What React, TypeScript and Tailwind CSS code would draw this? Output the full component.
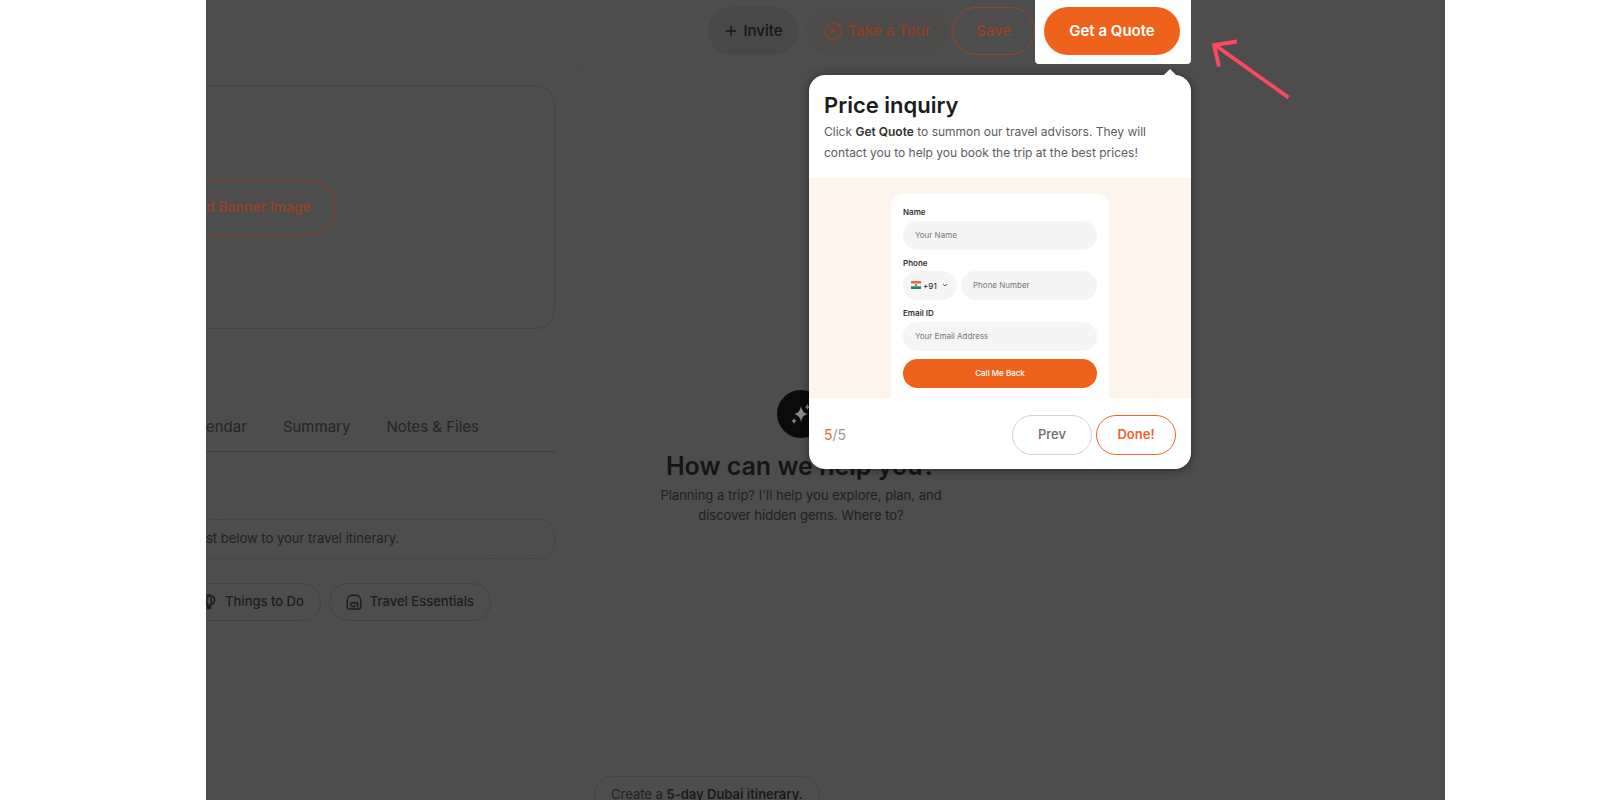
/**
 * Product tour, last step
 * Dimmed trip planner with the quote button highlighted and its popover open
 */

import React from 'react'
import type { ReactNode } from 'react'
import { Plus } from 'lucide-react'

// ============================================================================
// Icons
// ============================================================================

const TourIcon: React.FC = () => (
  <svg aria-hidden="true" viewBox="0 0 20 20" className="h-5 w-5" fill="none" stroke="currentColor" strokeWidth="1.6">
    <path d="M8 1.900a8.300 8.300 0 1 1-6.300 8.600" />
    <path d="M2.200 7.200l.7-1.500M4.400 3.900l1.300-1" strokeLinecap="round" />
    <path d="M8 6.800v6.400l5-3.200z" fill="currentColor" stroke="none" />
  </svg>
)

const BalloonIcon: React.FC = () => (
  <svg aria-hidden="true" viewBox="0 0 16 16" className="h-4 w-4" fill="none" stroke="currentColor" strokeWidth="1.4">
    <path d="M6 11C3.800 9.800 2.400 7.900 2.400 5.900a5.600 5 0 0 1 11.200 0C13.600 7.900 12.200 9.800 10 11z" />
    <path d="M6.300 11C5.200 7 5.300 3.500 8 1c2.700 2.500 2.800 6 1.700 10" />
    <path d="M6.500 12.500h3v2h-3z" fill="currentColor" />
  </svg>
)

const BackpackIcon: React.FC = () => (
  <svg aria-hidden="true" viewBox="0 0 16 16" className="h-4 w-4" fill="none" stroke="currentColor" strokeWidth="1.4">
    <path d="M1.300 6.500A5 5 0 0 1 6 1.200h4a5 5 0 0 1 4.700 5.300V13a2 2 0 0 1-2 2H3.300a2 2 0 0 1-2-2z" />
    <path d="M9 12.500H6.200a1.500 1.500 0 0 1-1.500-1.500v-.7a1.500 1.500 0 0 1 1.500-1.500h4.500a1 1 0 0 1 1 1v3.700M9 10.800v1.700" />
  </svg>
)

const SparkleIcon: React.FC = () => (
  <svg aria-hidden="true" viewBox="0 0 24 24" className="h-6 w-6" fill="currentColor">
    <path d="M12 4q1 7 7 8-6 1-7 8-1-7-7-8 6-1 7-8z" />
    <path d="M5 16q.4 2.600 2.600 3Q5.400 19.400 5 22q-.4-2.600-2.600-3Q4.600 18.600 5 16z" />
    <path d="M18.500 2q.4 2.600 2.600 3-2.200.4-2.600 3-.4-2.600-2.600-3 2.200-.4 2.600-3z" />
  </svg>
)

const IndiaFlag: React.FC = () => (
  <svg aria-hidden="true" viewBox="0 0 10 8" className="h-2 w-[10px]">
    <path d="M0 0h10v2.700H0z" fill="#f0642d" />
    <path d="M0 2.700h10v2.600H0z" fill="#f4f4f0" />
    <path d="M0 5.300h10V8H0z" fill="#23845a" />
    <circle cx="5" cy="4" r="1" fill="#4a5a9a" />
  </svg>
)

// ============================================================================
// Trip planner (dimmed)
// ============================================================================

const Chip: React.FC<{ icon: ReactNode; label: string }> = ({ icon, label }) => (
  <button className="flex h-[38px] shrink-0 items-center gap-2 rounded-full border border-[#434343] px-4 text-[13px] font-medium text-[#1c1c1c]">
    {icon}
    {label}
  </button>
)

const Itinerary: React.FC = () => (
  <section className="flex w-[349px] shrink-0 flex-col whitespace-nowrap">
    <div className="mt-[15px] flex h-[244px] items-center rounded-r-[20px] border border-l-0 border-[#444444]">
      <button className="h-[55px] rounded-r-full border border-l-0 border-[#8c3d20] pr-6 text-sm font-medium text-[#9c4222]">
        d Banner Image
      </button>
    </div>

    <nav className="mt-[74px] flex h-[49px] gap-9 border-b border-[#3c3c3c] text-[15px] leading-[47px] text-[#252525]">
      <a href="#calendar">endar</a>
      <a href="#summary">Summary</a>
      <a href="#notes">Notes &amp; Files</a>
    </nav>

    <p className="mt-[67px] flex h-10 items-center rounded-r-2xl border border-l-0 border-dashed border-[#424242] text-[13px] text-[#202020]">
      st below to your travel itinerary.
    </p>

    <div className="mt-6 flex justify-end gap-2 border-b border-[#494949] pr-16 pb-[77px]">
      <Chip icon={<BalloonIcon />} label="Things to Do" />
      <Chip icon={<BackpackIcon />} label="Travel Essentials" />
    </div>
  </section>
)

const Assistant: React.FC = () => (
  <section className="ml-[22px] flex w-[448px] shrink-0 flex-col border-x border-[#4b4b4b] px-4 text-center">
    <div className="mt-80 flex h-12 w-12 items-center justify-center self-center rounded-full bg-[#0b0b0b] text-[#8a8a8a]">
      <SparkleIcon />
    </div>
    <h1 className="mt-3 text-[25px] leading-8 font-semibold text-[#151515]">How can we help you?</h1>
    <p className="mt-[3px] text-[13px] leading-5 text-[#202020]">
      Planning a trip? I'll help you explore, plan, and
      <br />
      discover hidden gems. Where to?
    </p>
    <button className="mt-auto -mb-[14px] h-[38px] shrink-0 self-start rounded-full border border-[#434343] px-4 text-[13px] text-[#222222]">
      Create a <strong className="font-semibold text-[#1a1a1a]">5-day Dubai itinerary.</strong>
    </button>
  </section>
)

// ============================================================================
// Tour popover
// ============================================================================

const inputClass = 'h-[29px] w-full min-w-0 rounded-full bg-[#f5f5f5] px-3 text-[8px] text-[#555555] outline-none placeholder:text-[#777777]'
const labelClass = 'mb-[2px] block text-[8px] leading-3 font-semibold text-[#333333]'

const CallbackForm: React.FC = () => (
  <form className="w-[218px] rounded-t-xl bg-white px-3 pt-3 pb-[10px]" onSubmit={(e) => e.preventDefault()}>
    <label htmlFor="name" className={labelClass}>Name</label>
    <input id="name" placeholder="Your Name" className={inputClass} />

    <label htmlFor="phone" className={`mt-[7px] ${labelClass}`}>Phone</label>
    <div className="flex gap-1">
      <div className="relative shrink-0">
        <select
          aria-label="Country code"
          className="h-[29px] w-[54px] appearance-none rounded-full bg-[#f5f5f5] pl-5 text-[8px] font-medium text-[#333333] outline-none"
        >
          <option>+91</option>
        </select>
        <span className="pointer-events-none absolute inset-0 flex items-center justify-between px-2">
          <IndiaFlag />
          <svg aria-hidden="true" viewBox="0 0 8 8" className="h-2 w-2" fill="none" stroke="#666666">
            <path d="M2 3l2 2 2-2" />
          </svg>
        </span>
      </div>
      <input id="phone" type="tel" placeholder="Phone Number" className={inputClass} />
    </div>

    <label htmlFor="email" className={`mt-[7px] ${labelClass}`}>Email ID</label>
    <input id="email" type="email" placeholder="Your Email Address" className={inputClass} />

    <button className="mt-2 h-[29px] w-full rounded-full bg-[#ee621b] text-[8px] font-medium text-white">
      Call Me Back
    </button>
  </form>
)

const TourPopover: React.FC = () => (
  <div role="dialog" aria-labelledby="tour-title" className="absolute top-[75px] right-[254px] w-[382px] rounded-2xl bg-white shadow-[0_1px_10px_rgba(0,0,0,0.45)]">
    <span className="absolute -top-1 right-4 h-[10px] w-[10px] rotate-45 bg-white" />
    <div className="relative px-[15px] pt-4 pb-[15px]">
      <h2 id="tour-title" className="text-[22px] leading-7 font-semibold text-[#1c1c1c]">Price inquiry</h2>
      <p className="mt-[2px] text-xs leading-[21px] text-[#5c5c5c]">
        Click <strong className="font-semibold text-[#333333]">Get Quote</strong> to summon our travel advisors. They will
        <br />
        contact you to help you book the trip at the best prices!
      </p>
    </div>
    <div className="flex justify-center bg-[#fdf5eb] pt-4">
      <CallbackForm />
    </div>
    <div className="flex items-center gap-1 px-[15px] pt-[17px] pb-[14px] text-[13px] font-medium">
      <span className="mr-auto text-sm font-normal text-[#999999]">
        <span className="text-[#f0622d]">5</span>/5
      </span>
      <button className="h-10 w-20 rounded-full border border-[#d4d4d8] text-[#6b6b70]">Prev</button>
      <button className="h-10 w-20 rounded-full border border-[#f0622d] font-semibold text-[#f0622d]">Done!</button>
    </div>
  </div>
)

// ============================================================================
// Page
// ============================================================================

const App: React.FC = () => (
  <div className="min-h-screen bg-white pr-[155px] pl-[206px] font-[Inter,sans-serif]">
    <div className="relative flex h-screen flex-col overflow-hidden bg-[#4d4d4d]">
      <header className="flex h-[70px] shrink-0 items-start justify-end border-b border-[#494949] pr-[254px] text-[15px] font-medium">
        <button className="mt-[7px] mr-2 flex h-12 w-[90px] items-center justify-center gap-1 rounded-full bg-[#484848] text-[#151515]">
          <Plus className="h-4 w-4" />
          Invite
        </button>
        <button className="mt-[7px] mr-1 flex h-12 w-[142px] items-center justify-center gap-1 rounded-full bg-[#4d4b49] text-[#923d20]">
          <TourIcon />
          Take a Tour
        </button>
        <button className="mt-[7px] h-12 w-[83px] rounded-full border border-[#9c4222] text-[#9c4222]">Save</button>
        <div className="h-16 rounded-b-[4px] bg-white pt-[7px] pr-[11px] pl-[9px]">
          <button className="h-12 w-[136px] rounded-full bg-[#ee621b] font-semibold text-white">Get a Quote</button>
        </div>
      </header>

      <main className="flex min-h-0 flex-1">
        <Itinerary />
        <Assistant />
      </main>

      <TourPopover />

      <svg aria-hidden="true" viewBox="0 0 80 60" className="absolute top-[39px] right-[153px] h-[60px] w-20" fill="none" stroke="#ff4860" strokeWidth="3.800">
        <path d="M76.500 58.500L3 6M25 2.500L2 6l5 21.500" />
      </svg>
    </div>
  </div>
)

export default App
